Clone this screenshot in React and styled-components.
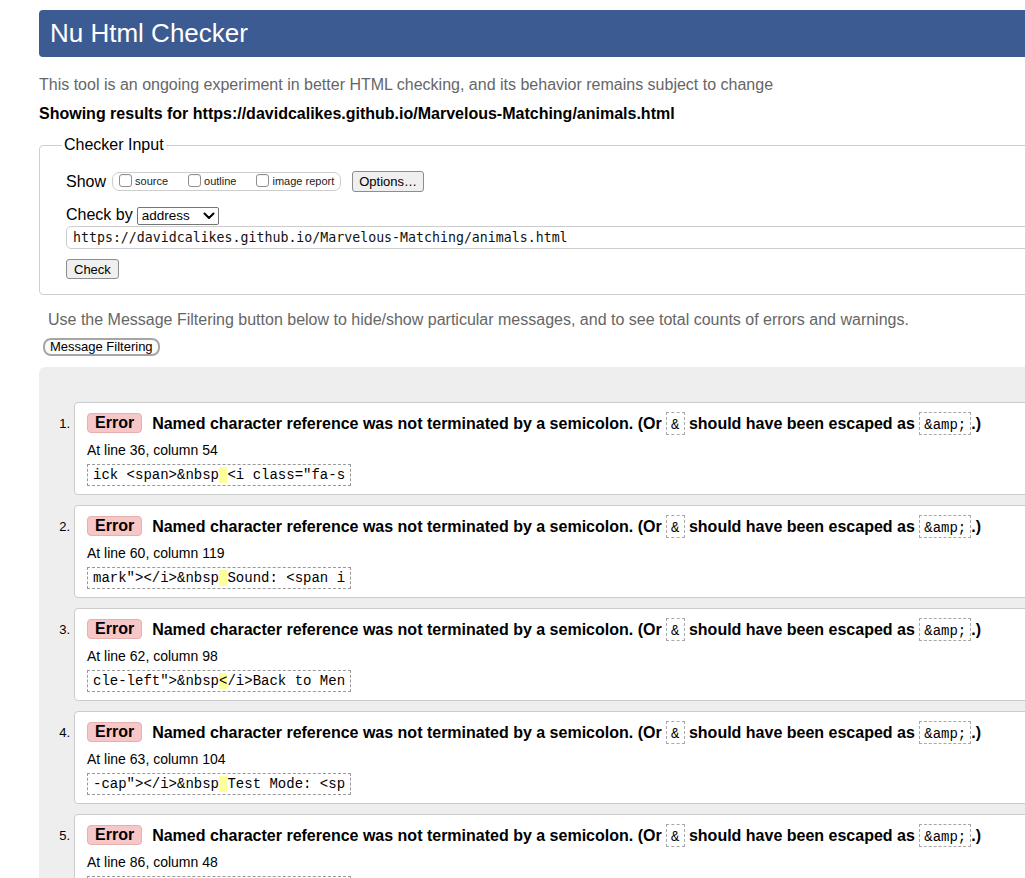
import React from "react";
import styled, { createGlobalStyle } from "styled-components";

const GlobalStyle = createGlobalStyle`
  html, body { margin: 0; padding: 0; overflow: hidden; background: #fff; }
  body {
    font-family: "Liberation Sans", Arial, Helvetica, sans-serif;
    color: #000;
  }
  * { box-sizing: border-box; }
`;

const Page = styled.div`
  width: 1139px;
  padding: 10px 0 0 39px;
`;

const Banner = styled.h1`
  margin: 0;
  height: 47px;
  line-height: 47px;
  padding-left: 11px;
  background: #3d5b93;
  color: #fff;
  font-size: 26px;
  font-weight: normal;
  border-radius: 4px;
`;

const Intro = styled.p`
  margin: 18px 0 0;
  font-size: 16px;
  line-height: 20px;
  color: #666;
`;

const ResultsFor = styled.p`
  margin: 9px 0 0;
  font-size: 16px;
  line-height: 20px;
  font-weight: bold;
`;

const InputSet = styled.fieldset`
  margin: 11px 0 0;
  padding: 16px 0 15px 26px;
  border: 1px solid #cfcfcf;
  border-radius: 4px;
  min-width: 0;
`;

const Legend = styled.legend`
  margin-left: -4px;
  padding: 0 2px;
  font-size: 16px;
  line-height: 20px;
`;

const Row = styled.div`
  display: flex;
  align-items: center;
  height: ${(p) => p.$h}px;
  margin-top: ${(p) => p.$mt || 0}px;
`;

const RowLabel = styled.span`
  font-size: 16px;
  line-height: 18px;
`;

const ShowGroup = styled.div`
  display: flex;
  align-items: center;
  height: 19px;
  margin-left: 6px;
  padding: 0 6px;
  border: 1px solid #cdcdcd;
  border-radius: 7px;
`;

const ShowOption = styled.label`
  display: flex;
  align-items: center;
  margin-right: ${(p) => (p.$last ? 0 : 20)}px;
  font-size: 11px;
  line-height: 13px;
  color: #222;
`;

const Tick = styled.input.attrs({ type: "checkbox" })`
  appearance: none;
  width: 13px;
  height: 13px;
  margin: 0 3px 2px 0;
  border: 1px solid #8f8f8f;
  border-radius: 3px;
  background: #fff;
  box-shadow: inset 0 1px 1px rgba(0, 0, 0, 0.06);
`;

const GreyButton = styled.button`
  height: ${(p) => p.$h || 21}px;
  margin-left: ${(p) => p.$ml || 0}px;
  padding: 0 ${(p) => p.$px || 6}px;
  font-family: "Liberation Sans", Arial, sans-serif;
  font-size: 13px;
  color: #000;
  background: #efefef;
  border: 1px solid #8d8d8d;
  border-radius: 3px;
`;

const SelectWrap = styled.div`
  position: relative;
  margin-left: 4px;
  width: 82px;
  height: 18px;
`;

const Select = styled.select`
  appearance: none;
  width: 100%;
  height: 100%;
  padding: 0 0 0 4px;
  font-family: "Liberation Sans", Arial, sans-serif;
  font-size: 13.5px;
  color: #000;
  background: #fff;
  border: 1px solid #767676;
  border-radius: 2px;
`;

const Chevron = styled.svg`
  position: absolute;
  right: 4px;
  top: 6px;
  pointer-events: none;
`;

const UrlInput = styled.input`
  display: block;
  width: 1040px;
  height: 23px;
  margin-top: 2px;
  padding: 0 6px;
  font-family: "DejaVu Sans Mono", "Liberation Mono", monospace;
  font-size: 13.25px;
  color: #111;
  border: 1px solid #cdcdcd;
  border-radius: 5px;
  background: #fff;
`;

const CheckButton = styled(GreyButton)`
  display: block;
  margin-top: 10px;
`;

const FilterNote = styled.p`
  margin: 15px 0 0 9px;
  font-size: 16px;
  line-height: 20px;
  color: #666;
`;

const FilterButton = styled.button`
  display: block;
  height: 18px;
  margin: 8px 0 0 4px;
  padding: 0 5px;
  font-family: "Liberation Sans", Arial, sans-serif;
  font-size: 13px;
  line-height: 14px;
  color: #000;
  background: #fbfbfb;
  border: 2px solid #a6a6a6;
  border-radius: 8px;
`;

const Results = styled.div`
  margin-top: 11px;
  padding: 35px 0 40px;
  background: #eeeeee;
  border-radius: 6px;
`;

const MessageList = styled.ol`
  margin: 0;
  padding: 0;
  list-style: none;
`;

const Item = styled.li`
  display: flex;
  align-items: flex-start;
  margin-bottom: 10px;
`;

const Num = styled.span`
  flex: 0 0 35px;
  padding: 10px 4px 0 0;
  text-align: right;
  font-size: 13px;
  line-height: 24px;
`;

const Card = styled.div`
  flex: 1;
  padding: 8px 12px;
  background: #fff;
  border: 1px solid #cccccc;
  border-radius: 4px;
`;

const MessageLine = styled.div`
  display: flex;
  align-items: center;
  height: 24px;
  font-size: 16px;
  font-weight: bold;
  white-space: nowrap;
`;

const Badge = styled.strong`
  height: 20px;
  padding: 0 7px;
  line-height: 18px;
  background: #f7c6c6;
  border: 1px solid #e4b0b0;
  border-radius: 4px;
`;

const MessageText = styled.span`
  margin-left: 10px;
`;

const InlineCode = styled.code`
  display: inline-block;
  padding: 4px 4px 1px;
  font-family: "Liberation Mono", "Courier New", monospace;
  font-size: 14px;
  font-weight: normal;
  line-height: 16px;
  border: 1px dashed #a8a8a8;
`;

const Location = styled.p`
  margin: 7px 0 0;
  font-size: 14px;
  line-height: 17px;
`;

const Extract = styled.code`
  display: block;
  width: fit-content;
  margin-top: 5px;
  padding: 1px 5px;
  font-family: "Liberation Mono", "Courier New", monospace;
  font-size: 14px;
  line-height: 18px;
  white-space: pre;
  border: 1px dashed #999;
`;

const Mark = styled.span`
  background: #ffff99;
`;

const messages = [
  { line: 36, col: 54, before: "ick <span>&nbsp", hl: " ", after: '<i class="fa-s' },
  { line: 60, col: 119, before: 'mark"></i>&nbsp', hl: " ", after: "Sound: <span i" },
  { line: 62, col: 98, before: 'cle-left">&nbsp', hl: "<", after: "/i>Back to Men" },
  { line: 63, col: 104, before: '-cap"></i>&nbsp', hl: " ", after: "Test Mode: <sp" },
  { line: 86, col: 48, before: 'home"></i>&nbsp', hl: " ", after: "Home</a></div>" },
];

export default function App() {
  return (
    <>
      <GlobalStyle />
      <Page>
        <Banner>Nu Html Checker</Banner>
        <Intro>
          This tool is an ongoing experiment in better HTML checking, and its behavior remains
          subject to change
        </Intro>
        <ResultsFor>
          Showing results for https://davidcalikes.github.io/Marvelous-Matching/animals.html
        </ResultsFor>

        <InputSet>
          <Legend>Checker Input</Legend>
          <Row $h={21}>
            <RowLabel>Show</RowLabel>
            <ShowGroup>
              <ShowOption>
                <Tick />
                source
              </ShowOption>
              <ShowOption>
                <Tick />
                outline
              </ShowOption>
              <ShowOption $last>
                <Tick />
                image report
              </ShowOption>
            </ShowGroup>
            <GreyButton $ml={11}>Options…</GreyButton>
          </Row>
          <Row $h={18} $mt={14}>
            <RowLabel>Check by</RowLabel>
            <SelectWrap>
              <Select defaultValue="address">
                <option value="address">address</option>
                <option value="file">file upload</option>
                <option value="text">text input</option>
              </Select>
              <Chevron width="12" height="8" viewBox="0 0 12 8">
                <polyline
                  points="1.5,1.5 6,6 10.5,1.5"
                  fill="none"
                  stroke="#000"
                  strokeWidth="2"
                  strokeLinecap="round"
                  strokeLinejoin="round"
                />
              </Chevron>
            </SelectWrap>
          </Row>
          <UrlInput
            readOnly
            value="https://davidcalikes.github.io/Marvelous-Matching/animals.html"
          />
          <CheckButton $h={20} $px={7}>
            Check
          </CheckButton>
        </InputSet>

        <FilterNote>
          Use the Message Filtering button below to hide/show particular messages, and to see total
          counts of errors and warnings.
        </FilterNote>
        <FilterButton>Message Filtering</FilterButton>

        <Results>
          <MessageList>
            {messages.map((m, i) => (
              <Item key={i}>
                <Num>{i + 1}.</Num>
                <Card>
                  <MessageLine>
                    <Badge>Error</Badge>
                    <MessageText>
                      Named character reference was not terminated by a semicolon. (Or{" "}
                      <InlineCode>&amp;</InlineCode> should have been escaped as{" "}
                      <InlineCode>&amp;amp;</InlineCode>.)
                    </MessageText>
                  </MessageLine>
                  <Location>
                    At line {m.line}, column {m.col}
                  </Location>
                  <Extract>
                    {m.before}
                    <Mark>{m.hl}</Mark>
                    {m.after}
                  </Extract>
                </Card>
              </Item>
            ))}
          </MessageList>
        </Results>
      </Page>
    </>
  );
}
